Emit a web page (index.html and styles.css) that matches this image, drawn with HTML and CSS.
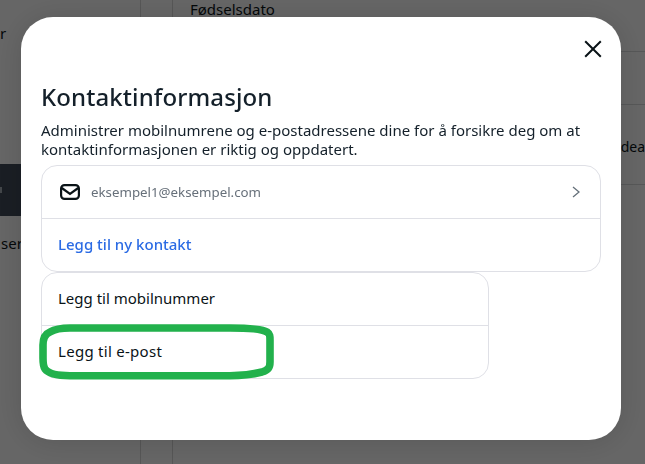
FILE: index.html
```html
<!DOCTYPE html>
<html lang="no">
<head>
<meta charset="utf-8">
<title>Kontaktinformasjon</title>
<link rel="stylesheet" href="styles.css">
</head>
<body>
<div class="page">
  <aside class="sidebar">
    <div class="side-text side-first">r</div>
    <div class="side-active"><span class="side-tick"></span></div>
    <div class="side-text side-last">ser</div>
  </aside>
  <div class="gutter"></div>
  <main class="main">
    <div class="row row-first">Fødselsdato</div>
    <div class="row row-b"></div>
    <div class="row row-c"><span class="row-end">dea</span></div>
  </main>
</div>
<div class="overlay">
  <section class="modal">
    <div class="modal-head">
      <button class="close" aria-label="Lukk">
        <svg width="18" height="18" viewBox="0 0 18 18"><path d="M1.2 1.2 16.8 16.8M16.8 1.2 1.2 16.8" fill="none" stroke="#0a1317" stroke-width="2"/></svg>
      </button>
    </div>
    <h1 class="title">Kontaktinformasjon</h1>
    <p class="lead">Administrer mobilnumrene og e-postadressene dine for å forsikre deg om at kontaktinformasjonen er riktig og oppdatert.</p>
    <div class="card card-wide">
      <div class="item item-contact">
        <svg class="mail" width="20" height="16" viewBox="0 0 20 16"><rect x="1.1" y="1.1" width="17.8" height="13.8" rx="3.4" fill="none" stroke="#0a1317" stroke-width="2.2"/><path d="M1.8 4 10 9.8 18.2 4" fill="none" stroke="#0a1317" stroke-width="2.2"/></svg>
        <span class="email">eksempel1@eksempel.com</span>
        <svg class="chev" width="8" height="12" viewBox="0 0 8 12"><path d="M1 1 7 6 1 11" fill="none" stroke="#65707a" stroke-width="1.3"/></svg>
      </div>
      <div class="item link">Legg til ny kontakt</div>
    </div>
    <div class="card card-menu">
      <div class="item">Legg til mobilnummer</div>
      <div class="item item-wide">Legg til e-post</div>
      <svg class="mark" width="240" height="60" viewBox="37 322 240 60"><path d="M70 328H230C250 328 262 329 267 332 270 334 270 336 270 340V362C270 368 268 370 262 372 250 375 240 375.7 230 375.7H70C55 375.7 48 373 45 369 43 366 43 362 43 358V345C43 338 45 334 50 332 55 329 62 328 70 328Z" fill="none" stroke="#22b14c" stroke-width="7.6"/></svg>
    </div>
  </section>
</div>
</body>
</html>
```
FILE: styles.css
```css
* { box-sizing: border-box; }
html, body { margin: 0; height: 100%; overflow: hidden; }
body { font-family: "Noto Sans", "Liberation Sans", sans-serif; color: #0a1317; background: #fff; }

.page { display: flex; height: 464px; background: #fff; }
.sidebar { width: 140px; font-size: 15px; }
.side-text { height: 20px; line-height: 20px; }
.side-first { margin-top: 23px; }
.side-active { height: 52px; margin-top: 121px; background: #414b5a; display: flex; align-items: center; }
.side-tick { width: 2px; height: 6px; background: #a8b0b8; }
.side-last { margin-top: 17px; padding-left: 1px; }
.gutter { width: 33px; border-left: 1px solid #d8d8d8; border-right: 1px solid #d8d8d8; }
.main { flex: 1; font-size: 15px; }
.row { border-bottom: 1px solid #d8dadc; }
.row-first { height: 52px; padding: 0 0 0 17px; line-height: 19px; }
.row-b { height: 53px; }
.row-c { height: 80px; position: relative; }
.row-end { position: absolute; right: 0; top: 33px; font-size: 14px; line-height: 18px; }

.overlay { position: fixed; inset: 0; background: rgba(0, 0, 0, .6); padding: 17px 0 0 21px; }
.modal { width: 600px; height: 423px; background: #fff; border-radius: 32px; padding: 20px 19px 0 20px; box-shadow: 0 2px 30px rgba(0, 0, 0, .14); }
.modal-head { display: flex; justify-content: flex-end; height: 44px; }
.close { width: 18px; height: 18px; margin: 3px 0 0; padding: 0; border: 0; background: none; display: block; }
.close svg { display: block; }
.title { margin: 0; font-size: 24px; line-height: 32px; font-weight: 500; letter-spacing: .1px; color: #14202a; }
.lead { margin: 8px 0 0; font-size: 15px; line-height: 19px; color: #14202a; width: 560px; }
.card { position: relative; background: #fff; border: 1px solid #dfe0e6; border-radius: 16px; }
.card-wide { width: 560px; margin-top: 6px; }
.card-menu { width: 448px; }
.item { height: 52px; padding: 0 16px 2px; display: flex; align-items: center; font-size: 15px; font-weight: 400; color: #0a1317; }
.item + .item { height: 53px; border-top: 1px solid #dfe0e6; }
.item-contact { padding: 0 16px 0 18px; }
.item-wide { letter-spacing: .28px; }
.mail { flex: none; }
.email { margin-left: 11px; flex: 1; font-size: 13.3px; font-weight: 400; color: #67707a; }
.chev { flex: none; margin-right: 4px; }
.link { color: #2b6be4; font-weight: 500; }
.mark { position: absolute; left: -5px; top: 49px; }
```
